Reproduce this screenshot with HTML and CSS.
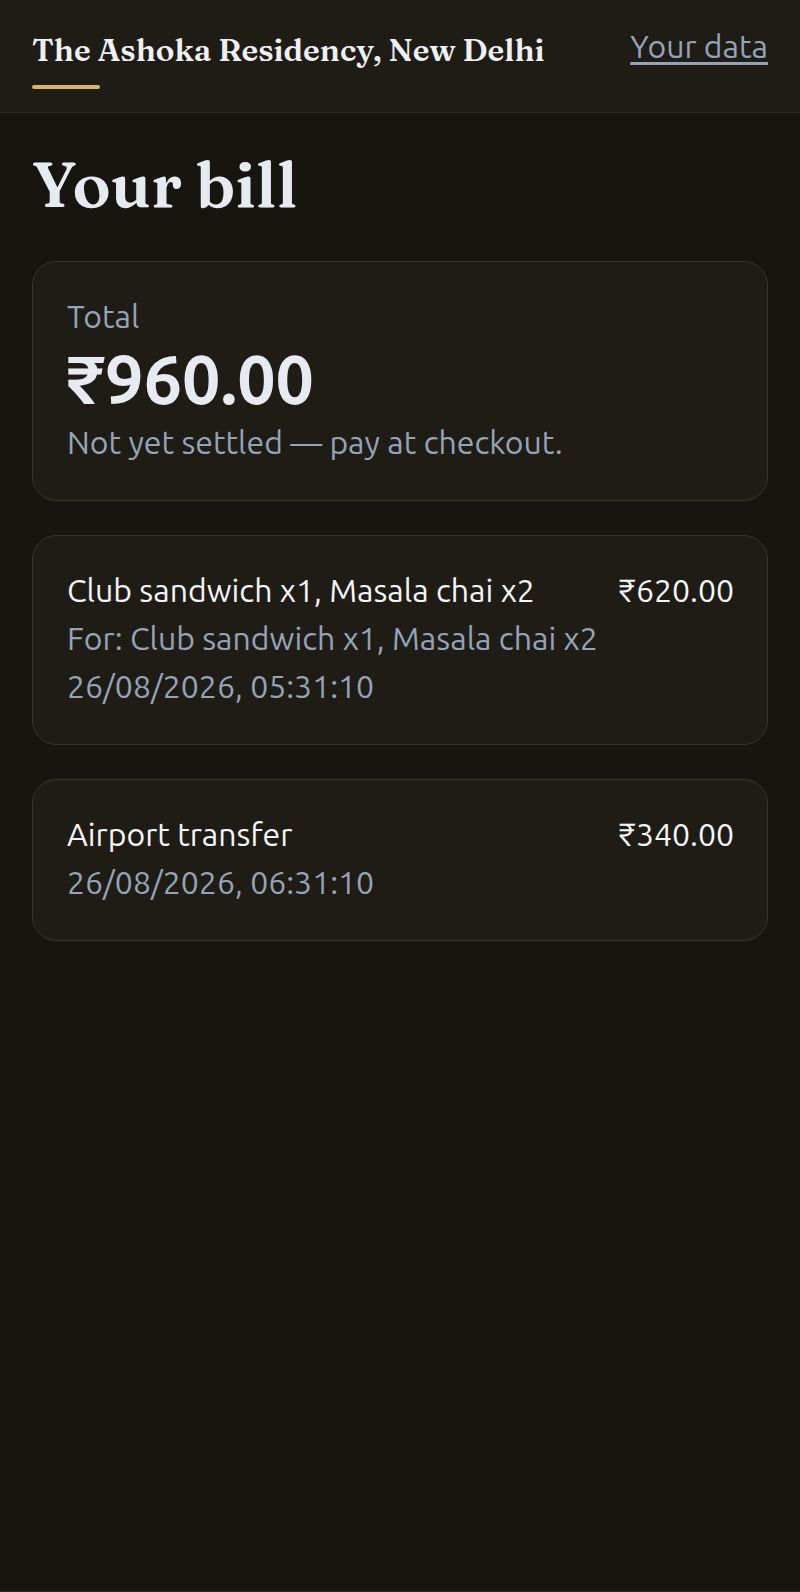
FILE: index.html
```html
<!DOCTYPE html>
<html lang="en">
<head>
<meta charset="utf-8">
<title>Your bill</title>
<link rel="stylesheet" href="styles.css">
</head>
<body>
<div class="page">
  <header class="topbar">
    <div class="brand">
      <div class="brand-name">The Ashoka Residency, New Delhi</div>
      <div class="brand-bar"></div>
    </div>
    <a class="data-link" href="#">Your data</a>
  </header>
  <main class="content">
    <h1 class="title">Your bill</h1>
    <section class="card total-card">
      <div class="muted">Total</div>
      <div class="total-amount">₹960.00</div>
      <div class="muted">Not yet settled — pay at checkout.</div>
    </section>
    <section class="card item">
      <div class="item-row">
        <div class="item-name">Club sandwich x1, Masala chai x2</div>
        <div class="item-price">₹620.00</div>
      </div>
      <div class="muted">For: Club sandwich x1, Masala chai x2</div>
      <div class="muted">26/08/2026, 05:31:10</div>
    </section>
    <section class="card item">
      <div class="item-row">
        <div class="item-name">Airport transfer</div>
        <div class="item-price">₹340.00</div>
      </div>
      <div class="muted">26/08/2026, 06:31:10</div>
    </section>
  </main>
  <footer class="footer"></footer>
</div>
</body>
</html>
```

FILE: styles.css
```css
* { box-sizing: border-box; }
html, body { margin: 0; padding: 0; }
body {
  background: #16150f;
  color: #eef0f5;
  font-family: Ubuntu, "Noto Sans", sans-serif;
  font-size: 32px;
  line-height: 1.5;
}
.page {
  min-height: 1655px;
  display: flex;
  flex-direction: column;
}
.topbar {
  background: #1f1c16;
  border-bottom: 1px solid #2e2a20;
  display: flex;
  justify-content: space-between;
  align-items: flex-start;
  padding: 28px 32px 0 32px;
  height: 113px;
  flex: none;
}
.brand-name {
  font-family: Fraunces, "Liberation Serif", serif;
  font-weight: 600;
  font-size: 31.2px;
  line-height: 44px;
  color: #eef0f5;
}
.brand-bar {
  width: 68px;
  height: 4px;
  border-radius: 2px;
  background: #d8b464;
  margin-top: 13px;
}
.data-link {
  color: #94a3b8;
  font-size: 32px;
  line-height: 36px;
  text-decoration: underline;
  text-underline-offset: 4px;
}
.content {
  flex: 1;
  padding: 29px 32px 32px;
  display: flex;
  flex-direction: column;
  gap: 34px;
}
.title {
  margin: 0 0 1px;
  font-family: Fraunces, "Liberation Serif", serif;
  font-weight: 600;
  font-size: 64px;
  line-height: 84px;
  color: #e8eaf2;
}
.card {
  background: #1f1c16;
  border: 1px solid #3a3427;
  border-radius: 24px;
  padding: 30px 33px 34px 34px;
}
.muted { color: #94a3b8; }
.total-amount {
  font-size: 68px;
  font-weight: 700;
  line-height: 78px;
  color: #e8eaf2;
}
.item-row {
  display: flex;
  justify-content: space-between;
  gap: 16px;
}
.item-name, .item-price { color: #f4f5f8; }
.footer {
  flex: none;
  height: 64px;
  background: #1f1c16;
  border-top: 1px solid #2e2a20;
}
```
